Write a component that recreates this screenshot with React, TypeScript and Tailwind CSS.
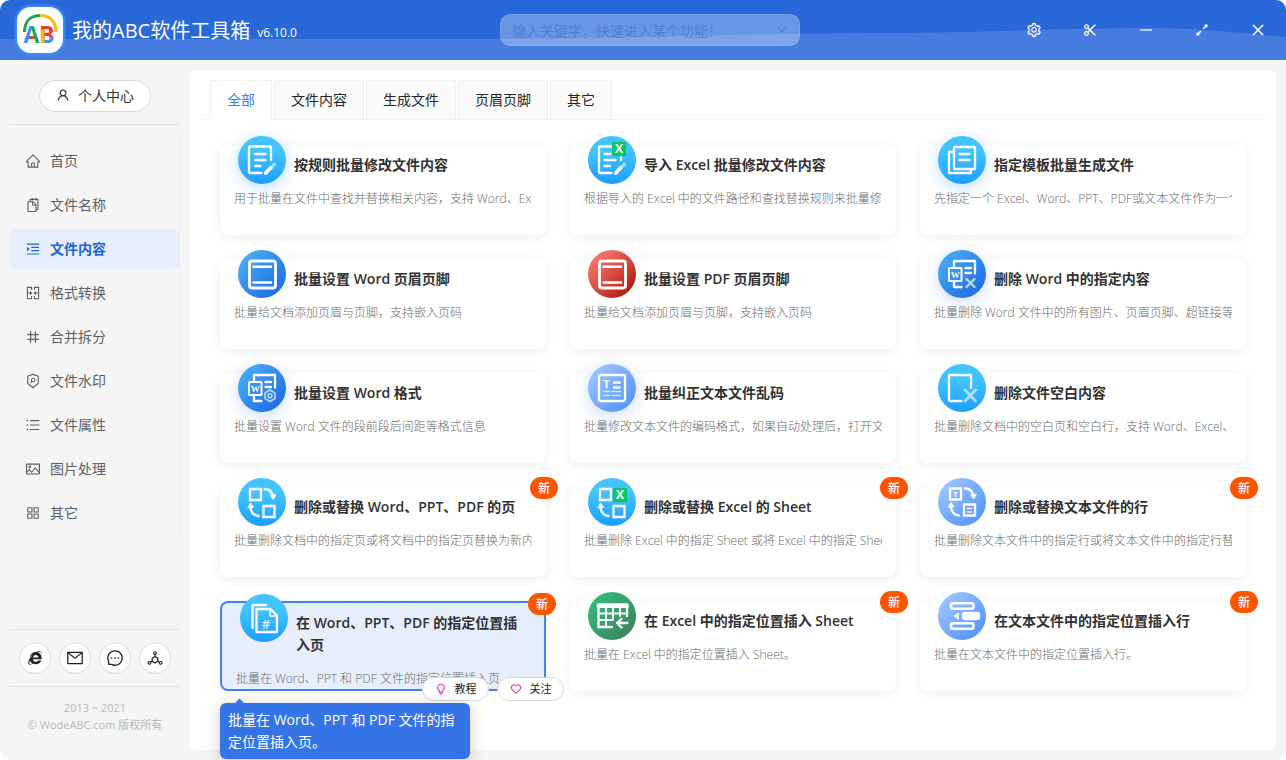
import React from "react";
import {
  AiOutlineAppstore,
  AiOutlineBulb,
  AiOutlineClose,
  AiOutlineDeploymentUnit,
  AiOutlineDown,
  AiOutlineExpandAlt,
  AiOutlineHeart,
  AiOutlineHome,
  AiOutlineIe,
  AiOutlineMail,
  AiOutlineMenuUnfold,
  AiOutlineMergeCells,
  AiOutlineMessage,
  AiOutlineMinus,
  AiOutlineNumber,
  AiOutlinePicture,
  AiOutlineScissor,
  AiOutlineSecurityScan,
  AiOutlineSetting,
  AiOutlineSnippets,
  AiOutlineUnorderedList,
  AiOutlineUser,
} from "react-icons/ai";

const WINDOW_ACTIONS = [
  { label: "设置", Icon: AiOutlineSetting },
  { label: "截图", Icon: AiOutlineScissor },
  { label: "最小化", Icon: AiOutlineMinus },
  { label: "最大化", Icon: AiOutlineExpandAlt },
  { label: "关闭", Icon: AiOutlineClose },
];

const MENU = [
  { label: "首页", Icon: AiOutlineHome },
  { label: "文件名称", Icon: AiOutlineSnippets },
  { label: "文件内容", Icon: AiOutlineMenuUnfold, active: true },
  { label: "格式转换", Icon: AiOutlineMergeCells },
  { label: "合并拆分", Icon: AiOutlineNumber },
  { label: "文件水印", Icon: AiOutlineSecurityScan },
  { label: "文件属性", Icon: AiOutlineUnorderedList },
  { label: "图片处理", Icon: AiOutlinePicture },
  { label: "其它", Icon: AiOutlineAppstore },
];

const CONTACTS = [
  { label: "官网", Icon: AiOutlineIe },
  { label: "邮箱", Icon: AiOutlineMail },
  { label: "留言", Icon: AiOutlineMessage },
  { label: "分享", Icon: AiOutlineDeploymentUnit },
];

const TABS = ["全部", "文件内容", "生成文件", "页眉页脚", "其它"];

const SKY = "bg-linear-to-b from-[#43c4ff] from-30% to-[#1a9fff]";
const BLUE = "bg-linear-to-br from-[#50b4f8] to-[#1c62df]";
const RED = "bg-linear-to-br from-[#fb7a72] from-10% to-[#b30d04] to-90%";
const SOFT = "bg-linear-to-br from-[#a8caff] to-[#468ef8]";
const GREEN = "bg-linear-to-br from-[#2fc482] to-[#3a7d55]";

const letter = {
  stroke: "none",
  fill: "#fff",
  fontWeight: 700,
  textAnchor: "middle" as const,
};

function Glyph({ children }: { children: React.ReactNode }) {
  return (
    <svg
      viewBox="0 0 48 48"
      className="w-12 h-12"
      fill="none"
      stroke="#fff"
      strokeWidth="2.3"
      strokeLinecap="round"
      strokeLinejoin="round"
      aria-hidden="true"
    >
      {children}
    </svg>
  );
}

const Pencil = () => (
  <>
    <path d="M28 36.5l6-6" strokeWidth="3.8" strokeLinecap="butt" />
    <path d="M26.5 38.2l.6-3 2.4 2.4z" fill="#fff" strokeWidth=".8" />
    <path d="M35.4 29.2l1-1" strokeWidth="3.4" opacity=".55" />
  </>
);

const EditGlyph = () => (
  <Glyph>
    <path d="M33 24V11.5a1 1 0 0 0-1-1H12a1 1 0 0 0-1 1V36a1 1 0 0 0 1 1h11.5" />
    <path d="M17 18h10.5M17 24h10.5M17 30h5.5" />
    <Pencil />
  </Glyph>
);

const ExcelTag = ({ x, y }: { x: number; y: number }) => (
  <>
    <rect x={x} y={y} width="14" height="14" rx="1" fill="#05c765" stroke="none" />
    <text x={x + 7} y={y + 11} fontSize="12" {...letter}>X</text>
  </>
);

const ImportGlyph = () => (
  <Glyph>
    <path d="M23.5 10.5H12a1 1 0 0 0-1 1V36a1 1 0 0 0 1 1h11.5M33 21.5V24" />
    <path d="M16.5 18h6M16.5 24h11M16.5 30h5.5" />
    <ExcelTag x={24} y={6} />
    <Pencil />
  </Glyph>
);

const TemplateGlyph = () => (
  <Glyph>
    <rect x="16" y="11" width="21" height="22" rx=".5" />
    <path d="M15.5 16H11v21h22v-3.5M21.5 18h10M21.5 24h10" />
  </Glyph>
);

const HeaderFooterGlyph = () => (
  <Glyph>
    <rect x="11.5" y="11" width="26" height="27" rx="2.5" strokeWidth="2.8" />
    <path d="M15.5 16.8H33M15.5 32.5H33" strokeWidth="2.6" />
  </Glyph>
);

const WordBase = () => (
  <>
    <path d="M16 17v-5.5a.5.5 0 0 1 .5-.5H37v12.5M16 31v6h7.5" />
    <rect x="11" y="18" width="12.5" height="13" rx=".5" strokeWidth="2" />
    <path d="M27.5 18H33M27.5 23H33" />
    <text x="17.3" y="27.5" fontSize="9" fontFamily="Liberation Serif, serif" {...letter}>W</text>
  </>
);

const WordDeleteGlyph = () => (
  <Glyph>
    <WordBase />
    <path d="M28.5 29l8 8M36.5 29l-8 8" opacity=".7" />
  </Glyph>
);

const WordFormatGlyph = () => (
  <Glyph>
    <WordBase />
    <g opacity=".7" strokeWidth="1.6">
      <path d="M32 26l5 3v5.5l-5 3-5-3V29z" />
      <circle cx="32" cy="31.8" r="2" />
    </g>
  </Glyph>
);

const TextGlyph = () => (
  <Glyph>
    <rect x="11" y="11" width="26" height="26" rx="1" />
    <text x="18.5" y="24" fontSize="11" {...letter}>T</text>
    <path d="M25 18.5h7.5M25 23.5h7.5" strokeLinecap="butt" />
    <path d="M15.5 27.5h6M24 27.5h8.5M15.5 31.500h6M24 31.500h8.500" strokeWidth="1.5" opacity=".7" />
  </Glyph>
);

const BlankGlyph = () => (
  <Glyph>
    <path d="M33 24V12a1 1 0 0 0-1-1H12a1 1 0 0 0-1 1v24a1 1 0 0 0 1 1h11.5" />
    <path d="M27 26l10.5 11M37.5 26L27 37" strokeWidth="3" opacity=".6" />
  </Glyph>
);

const ArrowIn = () => (
  <>
    <path d="M26.5 11q7.5 0 8.5 8" />
    <path d="M32.5 17.5l2.7 4 2.5-4.5z" fill="#fff" strokeWidth="1" />
  </>
);

const ArrowOut = () => (
  <>
    <path d="M20.5 38q-7.5-1-8-9" />
    <path d="M10 29.5l2.5-4.5 2.8 4z" fill="#fff" strokeWidth="1" />
  </>
);

const SwapGlyph = () => (
  <Glyph>
    <path d="M12 11h11v11H12zM25.5 28h11v11h-11z" strokeLinejoin="miter" />
    <ArrowIn />
    <ArrowOut />
  </Glyph>
);

const SwapSheetGlyph = () => (
  <Glyph>
    <path d="M12 11h11v11H12zM25.5 28h11v11h-11z" strokeLinejoin="miter" />
    <ExcelTag x={25} y={10} />
    <ArrowOut />
  </Glyph>
);

const SwapTextGlyph = () => (
  <Glyph>
    <path d="M12 10.5h11v11H12zM26 26.5h11v11H26z" strokeLinejoin="miter" />
    <text x="17.5" y="19.2" fontSize="7" {...letter}>T</text>
    <path d="M29.5 30.5h4M29.5 34h4" strokeWidth="1.5" />
    <g transform="translate(.5 -.5)">
      <ArrowIn />
      <ArrowOut />
    </g>
  </Glyph>
);

const InsertPageGlyph = () => (
  <Glyph>
    <path d="M12.5 34V11.5a.5.5 0 0 1 .5-.5h13" />
    <path d="M16.5 15h14l6.500 6.500V38h-20.500z" />
    <path d="M30 15.5V22h6.5" strokeWidth="1.5" />
    <text x="26" y="34.5" fontSize="13" {...letter} fontWeight={400}>#</text>
  </Glyph>
);

const InsertSheetGlyph = () => (
  <Glyph>
    <path d="M24 35H10.5V12.5H39V24" strokeLinejoin="miter" />
    <path d="M10.5 14H39" strokeWidth="4" />
    <path d="M11 21.5h28M11 28h14M18 16v18M25 16v12M32 16v8" strokeWidth="1.8" />
    <path d="M39.5 31H30M33.500 27l-4.500 4 4.500 4.500" />
  </Glyph>
);

const InsertRowGlyph = () => (
  <Glyph>
    <rect x="13" y="11.3" width="22.5" height="5.5" rx="2" strokeWidth="2.6" />
    <rect x="13" y="31.3" width="22.5" height="5.5" rx="2" strokeWidth="2.6" />
    <rect x="25" y="21" width="16" height="6" rx="2" fill="#fff" />
    <path d="M16.5 24l4-3v6z" fill="#fff" strokeWidth="1" />
  </Glyph>
);

type Tool = {
  title: string;
  desc: string;
  color: string;
  Icon: () => React.JSX.Element;
  glow?: string;
  isNew?: boolean;
  tip?: string;
};

const SKY_GLOW = "shadow-[0_4px_16px_rgba(26,159,255,0.3)]";
const BLUE_GLOW = "shadow-[0_4px_16px_rgba(50,110,255,0.25)]";

const TOOLS: Tool[] = [
  { title: "按规则批量修改文件内容", desc: "用于批量在文件中查找并替换相关内容，支持 Word、Excel", color: SKY, glow: SKY_GLOW, Icon: EditGlyph },
  { title: "导入 Excel 批量修改文件内容", desc: "根据导入的 Excel 中的文件路径和查找替换规则来批量修改", color: SKY, Icon: ImportGlyph },
  { title: "指定模板批量生成文件", desc: "先指定一个 Excel、Word、PPT、PDF或文本文件作为一个", color: SKY, glow: SKY_GLOW, Icon: TemplateGlyph },
  { title: "批量设置 Word 页眉页脚", desc: "批量给文档添加页眉与页脚，支持嵌入页码", color: BLUE, Icon: HeaderFooterGlyph },
  { title: "批量设置 PDF 页眉页脚", desc: "批量给文档添加页眉与页脚，支持嵌入页码", color: RED, Icon: HeaderFooterGlyph },
  { title: "删除 Word 中的指定内容", desc: "批量删除 Word 文件中的所有图片、页眉页脚、超链接等", color: BLUE, glow: BLUE_GLOW, Icon: WordDeleteGlyph },
  { title: "批量设置 Word 格式", desc: "批量设置 Word 文件的段前段后间距等格式信息", color: BLUE, glow: BLUE_GLOW, Icon: WordFormatGlyph },
  { title: "批量纠正文本文件乱码", desc: "批量修改文本文件的编码格式，如果自动处理后，打开文", color: SOFT, glow: BLUE_GLOW, Icon: TextGlyph },
  { title: "删除文件空白内容", desc: "批量删除文档中的空白页和空白行，支持 Word、Excel、", color: SKY, Icon: BlankGlyph },
  { title: "删除或替换 Word、PPT、PDF 的页", desc: "批量删除文档中的指定页或将文档中的指定页替换为新内", color: SKY, isNew: true, Icon: SwapGlyph },
  { title: "删除或替换 Excel 的 Sheet", desc: "批量删除 Excel 中的指定 Sheet 或将 Excel 中的指定 Sheet", color: SKY, isNew: true, Icon: SwapSheetGlyph },
  { title: "删除或替换文本文件的行", desc: "批量删除文本文件中的指定行或将文本文件中的指定行替", color: SOFT, isNew: true, Icon: SwapTextGlyph },
  {
    title: "在 Word、PPT、PDF 的指定位置插入页",
    desc: "批量在 Word、PPT 和 PDF 文件的指定位置插入页。",
    color: SKY,
    isNew: true,
    Icon: InsertPageGlyph,
    tip: "批量在 Word、PPT 和 PDF 文件的指定位置插入页。",
  },
  { title: "在 Excel 中的指定位置插入 Sheet", desc: "批量在 Excel 中的指定位置插入 Sheet。", color: GREEN, isNew: true, Icon: InsertSheetGlyph },
  { title: "在文本文件中的指定位置插入行", desc: "批量在文本文件中的指定位置插入行。", color: SOFT, isNew: true, Icon: InsertRowGlyph },
];

function Logo() {
  return (
    <div className="ml-[3px] w-[46px] h-[46px] shrink-0 rounded-[14px] bg-white shadow-[0_0_3px_2px_#3d92ff]">
      <svg viewBox="0 0 46 46" className="w-full h-full" fill="none" aria-label="AB">
        <defs>
          <linearGradient id="logoA">
            <stop offset=".56" stopColor="#4a8cf5" />
            <stop offset=".56" stopColor="#16a94f" />
          </linearGradient>
          <linearGradient id="logoB" x1="0" y1="0" x2="0" y2="1">
            <stop offset=".58" stopColor="#ea3a32" />
            <stop offset=".58" stopColor="#4a8cf5" />
          </linearGradient>
        </defs>
        <path d="M7.500 25C7.500 14 14 8.500 23.500 8.500" stroke="#16a94f" strokeWidth="3" />
        <path d="M23.500 8.500C33 8.500 39 15 39 25" stroke="#fbbc05" strokeWidth="3" />
        <text x="6.500" y="36" fontSize="23" fontWeight="700" fontFamily="Open Sans, sans-serif" fill="url(#logoA)">A</text>
        <text x="22" y="36" fontSize="23" fontWeight="700" fontFamily="Open Sans, sans-serif" fill="url(#logoB)">B</text>
        <path d="M12 30.700h5.500" stroke="#ea3a32" strokeWidth="2.600" />
        <path d="M25.700 22.500V36" stroke="#fbbc05" strokeWidth="3.200" />
      </svg>
    </div>
  );
}

function TopBar() {
  return (
    <header className="relative h-[60px] bg-[#2868d8] text-white flex items-center">
      <svg
        viewBox="0 0 1286 60"
        preserveAspectRatio="none"
        className="absolute inset-0 w-full h-full"
        aria-hidden="true"
      >
        <path d="M0 39H490C640 38 760 33 900 33C1000 32 1060 28 1155 28C1200 28 1240 33 1286 37V60H0Z" fill="#467be0" />
      </svg>
      <div className="relative flex-1 flex items-center pl-[14px]">
        <Logo />
        <h1 className="ml-[9px] mt-0.5 text-[20px] leading-[30px]">我的ABC软件工具箱</h1>
        <span className="ml-[7px] mt-1.5 text-[12px]">v6.10.0</span>
      </div>
      <div className="relative w-[300px] h-8 shrink-0 flex items-center rounded-[10px] border border-white/10 bg-white/30 px-[11px] text-[#527fd6]">
        <input
          type="text"
          aria-label="搜索功能"
          placeholder="输入关键字，快速进入某个功能！"
          className="flex-1 min-w-0 bg-transparent text-[14px] outline-none placeholder:text-[#527fd6]"
        />
        <AiOutlineDown size={12} />
      </div>
      <div className="relative flex-1 flex items-center justify-end">
        {WINDOW_ACTIONS.map(({ label, Icon }) => (
          <button key={label} type="button" aria-label={label} className="w-14 h-14 flex items-center justify-center">
            <Icon size={16} strokeWidth={16} />
          </button>
        ))}
      </div>
    </header>
  );
}

function Sidebar() {
  return (
    <aside className="w-[170px] shrink-0 flex flex-col">
      <div className="flex justify-center pb-3 border-b border-[#e4e4e4]">
        <button
          type="button"
          className="w-28 h-8 pb-0.5 flex items-center justify-center gap-2 rounded-full border border-[#d9d9d9] bg-white text-[14px] text-[#333]"
        >
          <AiOutlineUser size={14} strokeWidth={16} />
          个人中心
        </button>
      </div>
      <nav className="mt-3 py-1 flex flex-col gap-1 border-r border-[#ececec]">
        {MENU.map(({ label, Icon, active }) => (
          <a
            key={label}
            href="#"
            className={`h-10 flex items-center gap-[9px] pl-[15px] rounded-md text-[14px] ${
              active ? "bg-[#e7effd] text-[#1a66d9] font-bold" : "text-[#5c5f66]"
            }`}
          >
            <Icon size={16} />
            <span className="pb-0.5">{label}</span>
          </a>
        ))}
      </nav>
      <div className="mt-auto py-3 flex justify-center gap-2 border-y border-[#e4e4e4]">
        {CONTACTS.map(({ label, Icon }) => (
          <button
            key={label}
            type="button"
            aria-label={label}
            className="w-8 h-8 flex items-center justify-center rounded-full border border-[#dcdcdc] bg-white text-[#222]"
          >
            <Icon size={18} />
          </button>
        ))}
      </div>
      <footer className="pt-3 pb-[27px] text-center text-[11px] leading-[17px] text-[#b8b8b8]">
        <p>2013 ~ 2021</p>
        <p>© WodeABC.com 版权所有</p>
      </footer>
    </aside>
  );
}

function ToolCard({ tool }: { tool: Tool }) {
  const { title, desc, color, glow, Icon, isNew, tip } = tool;
  return (
    <article
      className={`relative min-h-[90px] rounded-lg px-[14px] ${
        tip
          ? "z-10 border-2 border-[#3f82f0] bg-[#e8effc]"
          : "bg-white shadow-[0_2px_12px_rgba(0,0,0,0.07)]"
      }`}
    >
      <div className="flex items-start gap-2 pl-1">
        <div className={`-mt-[9px] -mb-2 w-12 h-12 shrink-0 rounded-full ${color} ${glow ?? ""}`}>
          <Icon />
        </div>
        <h3 className="pt-[9px] text-[14px] leading-[22px] font-semibold text-[#303133]">{title}</h3>
      </div>
      <p className="relative mt-[13px] text-[12px] leading-5 font-light text-[#6b6b6b] whitespace-nowrap overflow-hidden">
        {desc}
      </p>
      {isNew && (
        <span className="absolute -top-[10px] -right-3 w-7 h-[22px] rounded-full bg-[#ff5500] text-white text-[12px] leading-6 text-center font-medium">
          新
        </span>
      )}
      {tip && (
        <>
          <div className="absolute -right-5 -bottom-3 flex gap-2 text-[11px] text-[#222]">
            <button type="button" className="w-[67px] h-6 flex items-center justify-center gap-2 rounded-full border border-[#d9d9d9] bg-white">
              <AiOutlineBulb size={12} strokeWidth={16} className="text-[#eb2f96]" />
              教程
            </button>
            <button type="button" className="w-[67px] h-6 flex items-center justify-center gap-2 rounded-full border border-[#d9d9d9] bg-white">
              <AiOutlineHeart size={12} strokeWidth={16} className="text-[#eb2f96]" />
              关注
            </button>
          </div>
          <div
            role="tooltip"
            className="absolute top-[100px] -left-0.5 w-[250px] rounded-md bg-[#3574e6] px-2 py-1.5 text-[14px] leading-[22px] text-white shadow-[0_3px_16px_rgba(0,0,0,0.2)]"
          >
            <span className="absolute -top-[3px] left-4 w-[7px] h-[7px] rotate-45 bg-[#3574e6]" />
            {tip}
          </div>
        </>
      )}
    </article>
  );
}

export default function App() {
  return (
    <div
      className="min-h-screen flex flex-col rounded-[10px] overflow-hidden bg-[#f5f5f5]"
      style={{ fontFamily: "'Open Sans', 'Noto Sans CJK SC', sans-serif" }}
    >
      <TopBar />
      <div className="flex-1 flex gap-[10px] px-[10px]">
        <div className="flex pt-5">
          <Sidebar />
        </div>
        <main className="flex-1 min-w-0 my-[10px] rounded-md bg-white p-[10px]">
          <div role="tablist" className="flex gap-0.5 pl-[10px] border-b border-[#f0f0f0]">
            {TABS.map((tab, i) => (
              <button
                key={tab}
                type="button"
                role="tab"
                aria-selected={i === 0}
                className={`h-10 -mb-px px-4 pb-0.5 rounded-t-[2px] border border-[#f0f0f0] text-[14px] ${
                  i === 0 ? "bg-white border-b-white text-[#3580ff]" : "bg-[#fafafa] text-[#262626]"
                }`}
              >
                {tab}
              </button>
            ))}
          </div>
          <div className="grid grid-cols-3 gap-6 px-5 pt-[25px]">
            {TOOLS.map((tool) => (
              <ToolCard key={tool.title} tool={tool} />
            ))}
          </div>
        </main>
      </div>
    </div>
  );
}
